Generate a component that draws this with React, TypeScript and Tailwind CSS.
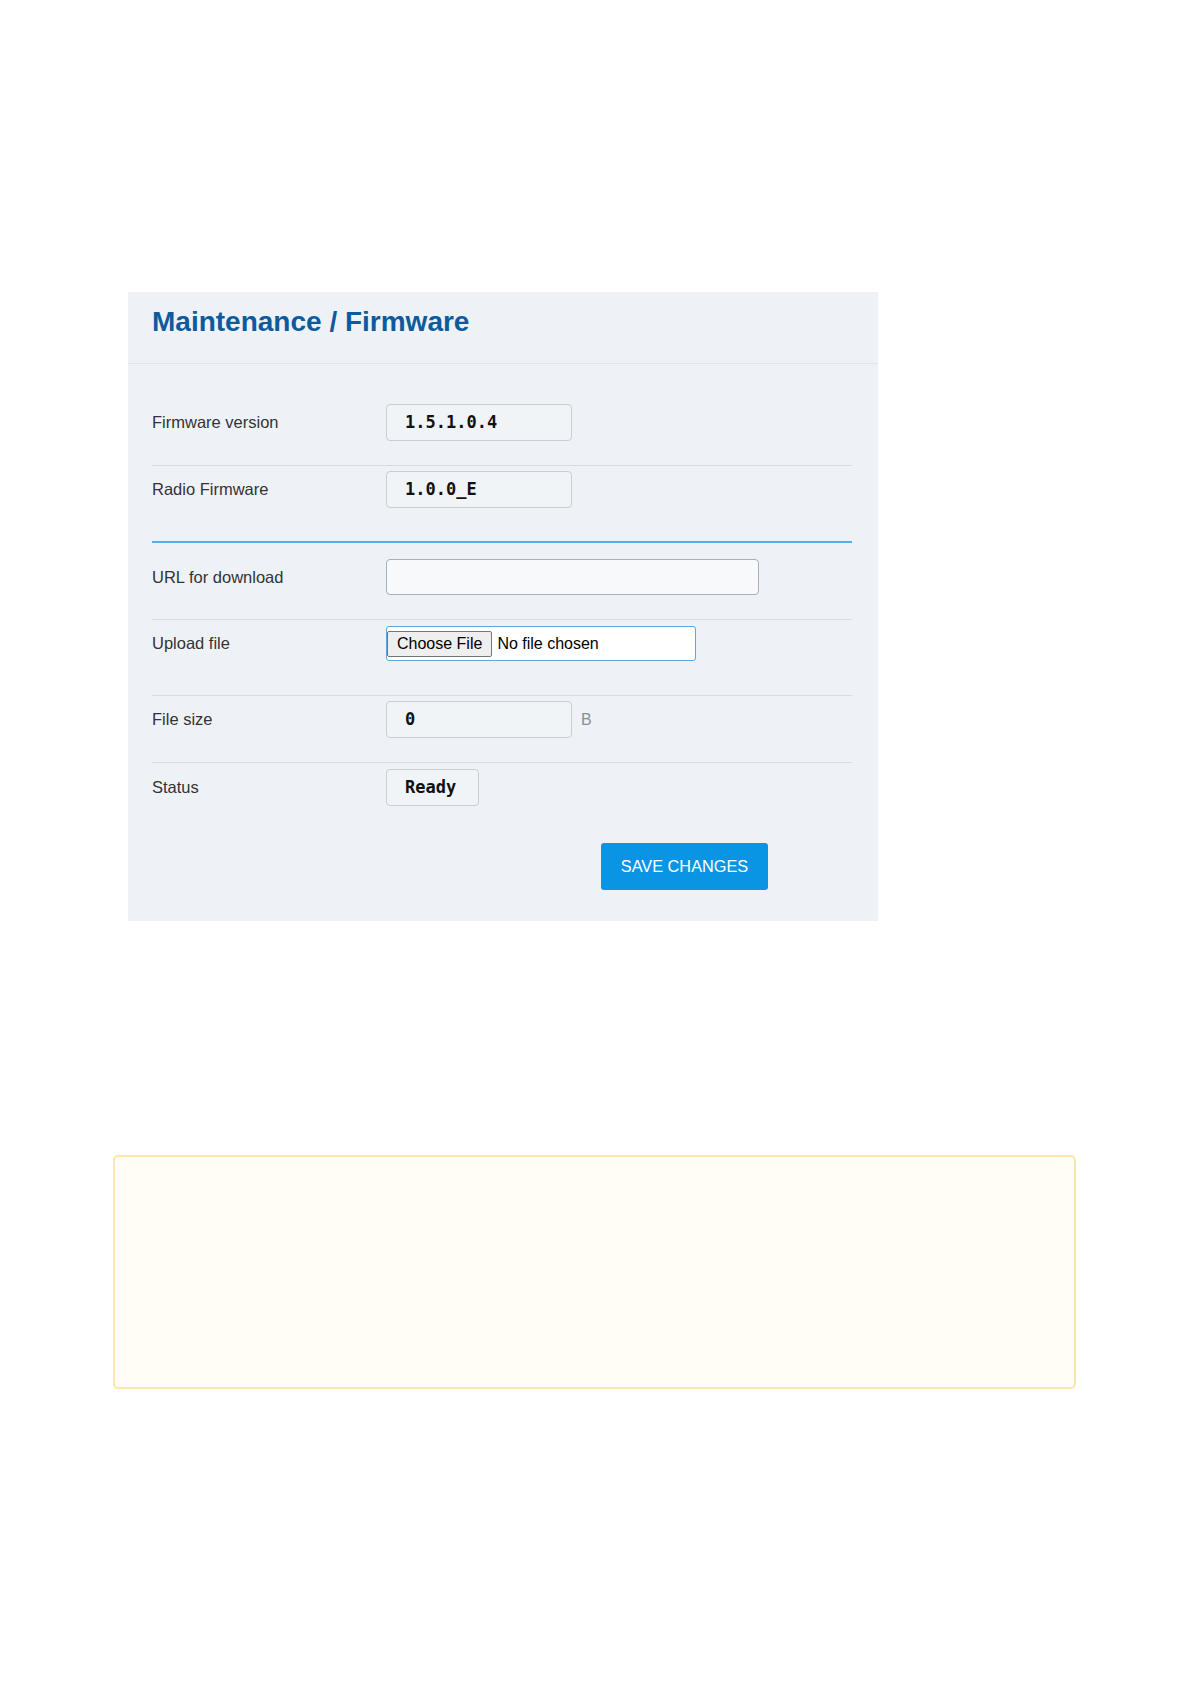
const sans = "font-['Liberation_Sans',Arial,sans-serif]";
const mono = "font-['DejaVu_Sans_Mono',monospace]";

function Row({
  label,
  className,
  children,
}: {
  label: string;
  className: string;
  children: React.ReactNode;
}) {
  return (
    <div className={`flex items-center ${className}`}>
      <div className="w-[234px] shrink-0 text-[16.5px] text-[#333]">{label}</div>
      {children}
    </div>
  );
}

function ReadBox({ value, width }: { value: string; width: string }) {
  return (
    <div
      className={`flex h-[37px] items-center rounded-[4px] border border-[#c9ced4] bg-[#f1f4f7] pl-[18px] ${width}`}
    >
      <span className={`${mono} text-[17px] font-bold text-[#111]`}>{value}</span>
    </div>
  );
}

export default function App() {
  return (
    <div className={`min-h-[1684px] bg-white pt-[292px] ${sans}`}>
      <div className="ml-[128px] w-[750px] bg-[#eef2f7]">
        <div className="h-[72px] border-b border-[#e1e5ea] px-6 pt-[14px]">
          <h1 className="text-[28px] font-bold leading-[32px] text-[#0d5b9c]">
            Maintenance / Firmware
          </h1>
        </div>

        <div className="pl-6 pr-[26px] pb-[31px]">
          <Row label="Firmware version" className="border-b border-[#d8dce1] pt-[40px] pb-[24px]">
            <ReadBox value="1.5.1.0.4" width="w-[186px]" />
          </Row>

          <Row label="Radio Firmware" className="border-b-2 border-[#5aacE4] pt-[5px] pb-[33px]">
            <ReadBox value="1.0.0_E" width="w-[186px]" />
          </Row>

          <Row label="URL for download" className="border-b border-[#d8dce1] pt-[16px] pb-[24px]">
            <div className="h-[36px] w-[373px] rounded-[4px] border border-[#a7afb8] bg-[#f7f9fb]" />
          </Row>

          <Row label="Upload file" className="border-b border-[#d8dce1] pt-[6px] pb-[34px]">
            <div className="flex h-[35px] w-[310px] items-center rounded-[3px] border border-[#5aa8de] bg-white">
              <span className="flex h-[26px] items-center rounded-[2px] border border-[#767676] bg-[#efefef] px-[9px] text-[16px] text-black">
                Choose File
              </span>
              <span className="ml-[5px] text-[16px] text-black">No file chosen</span>
            </div>
          </Row>

          <Row label="File size" className="border-b border-[#d8dce1] pt-[5px] pb-[24px]">
            <ReadBox value="0" width="w-[186px]" />
            <span className="ml-[9px] text-[16px] text-[#8a8f95]">B</span>
          </Row>

          <Row label="Status" className="pt-[6px]">
            <ReadBox value="Ready" width="w-[93px]" />
          </Row>

          <div className="mt-[37px] flex">
            <button className="ml-[449px] h-[47px] w-[167px] rounded-[3px] bg-[#0a95e4] text-[16.3px] text-white">
              SAVE CHANGES
            </button>
          </div>
        </div>
      </div>

      <div className="mt-[234px] ml-[113px] h-[234px] w-[963px] rounded-[5px] border-2 border-[#fbe8a6] bg-[#fffdf6]" />
    </div>
  );
}
